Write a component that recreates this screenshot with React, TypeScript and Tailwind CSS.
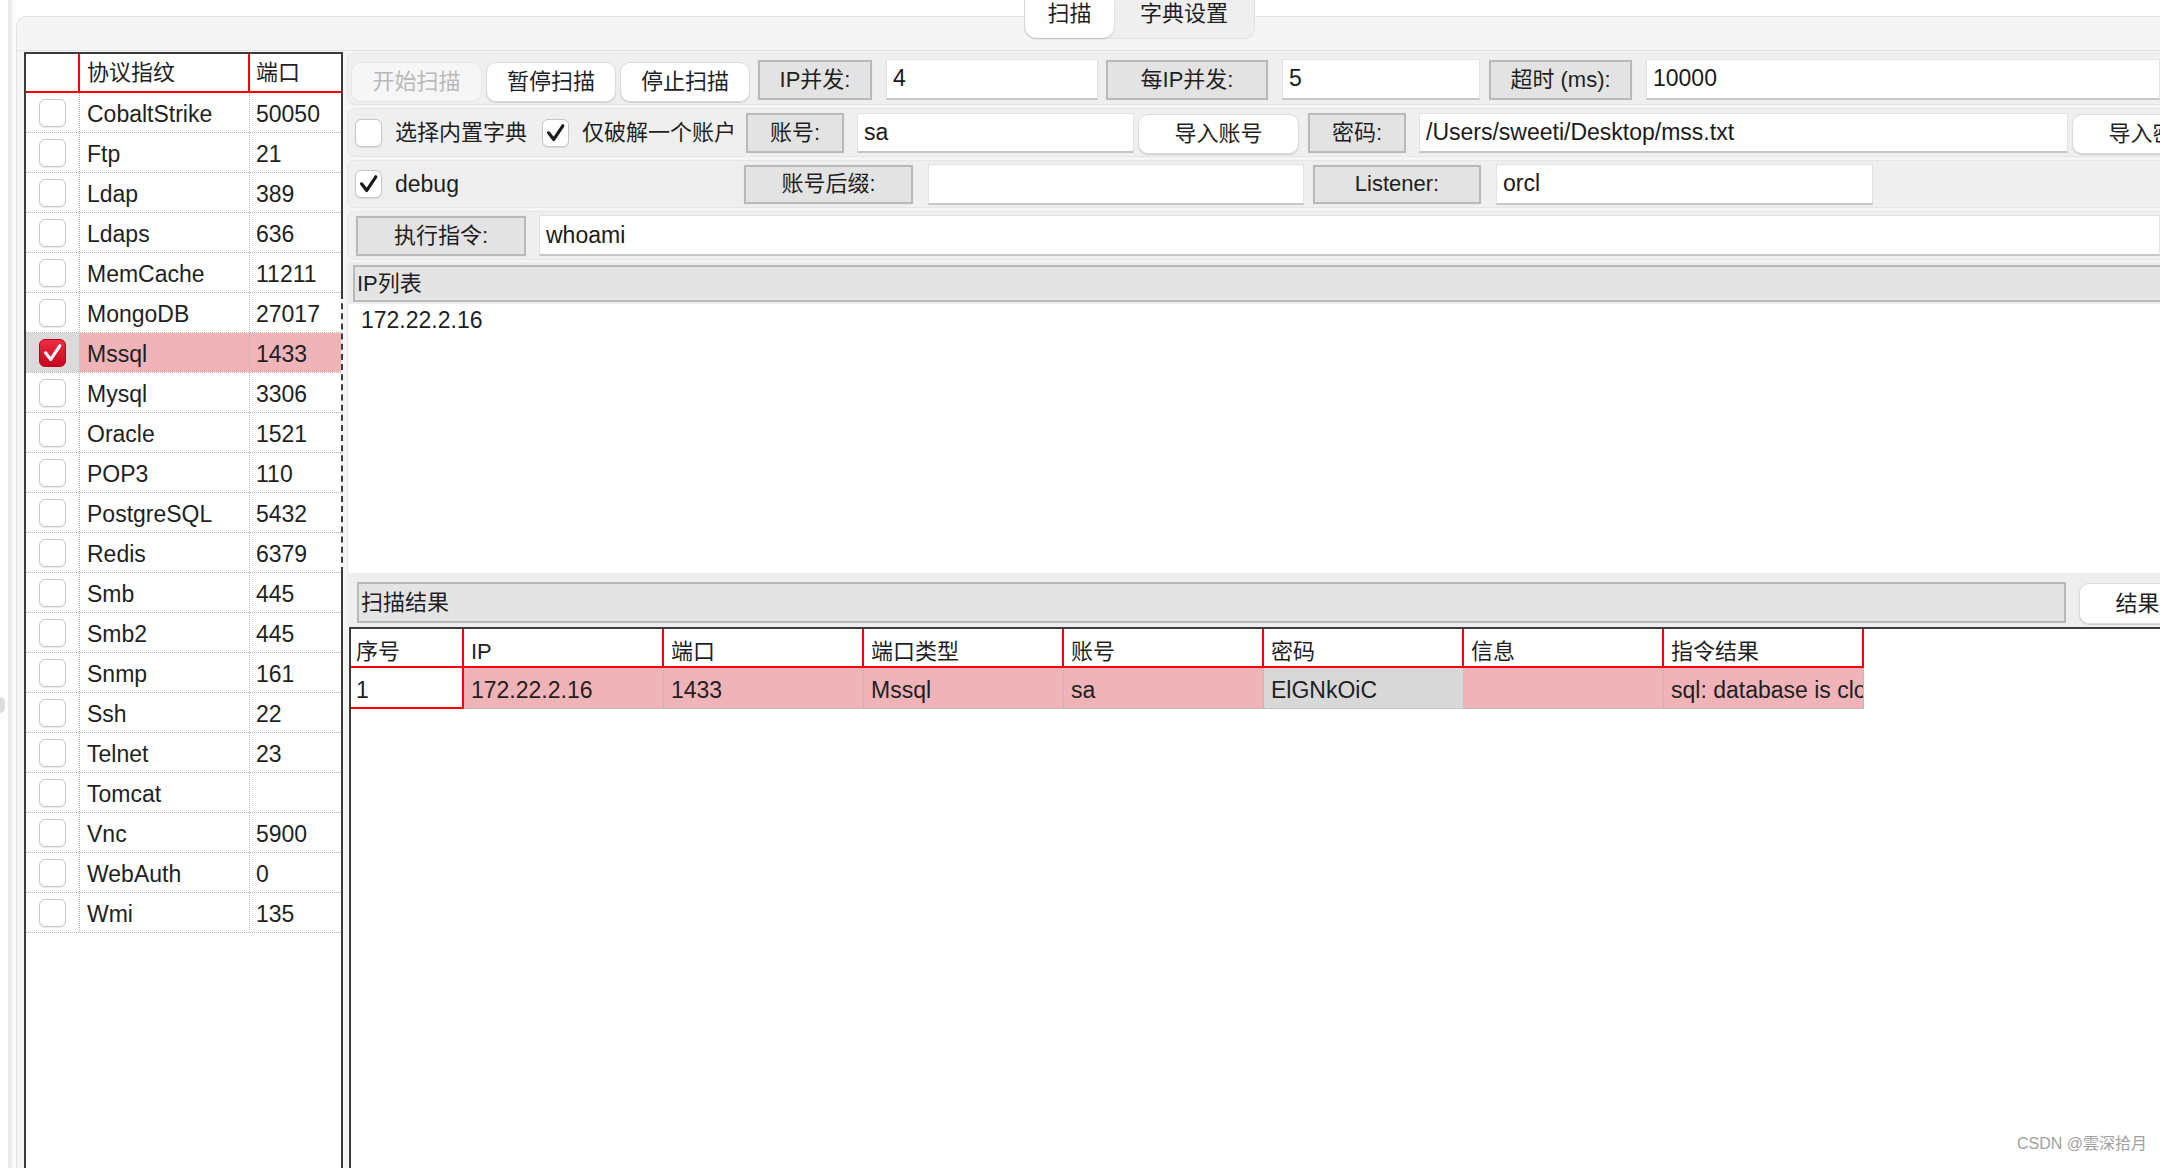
import React from "react";

type Proto = { name: string; port: string; checked?: boolean };

const protocols: Proto[] = [
  { name: "CobaltStrike", port: "50050" },
  { name: "Ftp", port: "21" },
  { name: "Ldap", port: "389" },
  { name: "Ldaps", port: "636" },
  { name: "MemCache", port: "11211" },
  { name: "MongoDB", port: "27017" },
  { name: "Mssql", port: "1433", checked: true },
  { name: "Mysql", port: "3306" },
  { name: "Oracle", port: "1521" },
  { name: "POP3", port: "110" },
  { name: "PostgreSQL", port: "5432" },
  { name: "Redis", port: "6379" },
  { name: "Smb", port: "445" },
  { name: "Smb2", port: "445" },
  { name: "Snmp", port: "161" },
  { name: "Ssh", port: "22" },
  { name: "Telnet", port: "23" },
  { name: "Tomcat", port: "" },
  { name: "Vnc", port: "5900" },
  { name: "WebAuth", port: "0" },
  { name: "Wmi", port: "135" },
];

const resultCols = ["IP", "端口", "端口类型", "账号", "密码", "信息", "指令结果"];
const resultRow = ["172.22.2.16", "1433", "Mssql", "sa", "ElGNkOiC", "", "sql: database is closed"];

function CheckMark({ color }: { color: string }) {
  return (
    <svg viewBox="0 0 27 28" className="w-full h-full">
      <path
        d="M6 13.8 L11.6 21 L21.4 6.2"
        fill="none"
        stroke={color}
        strokeWidth="3.4"
        strokeLinecap="round"
        strokeLinejoin="round"
      />
    </svg>
  );
}

function Box({ checked, red }: { checked?: boolean; red?: boolean }) {
  if (checked && red) {
    return (
      <div className="w-[27px] h-[28px] shrink-0 rounded-[6px] bg-gradient-to-b from-[#ef2b44] to-[#c6001b] border border-[#b50018]">
        <CheckMark color="#ffffff" />
      </div>
    );
  }
  return (
    <div className="w-[27px] h-[28px] shrink-0 rounded-[6px] bg-white border border-[#c6c6c6] shadow-[0_1px_1px_rgba(0,0,0,0.08)]">
      {checked && <CheckMark color="#1a1a1a" />}
    </div>
  );
}

function Tag({ className, children }: { className: string; children: React.ReactNode }) {
  return (
    <div
      className={`shrink-0 flex items-center justify-center border-2 border-[#b9b9b9] bg-[#e3e3e3] outline outline-1 outline-[#ebebeb] ${className}`}
    >
      {children}
    </div>
  );
}

function Field({ className, value }: { className: string; value: string }) {
  return (
    <input
      readOnly
      defaultValue={value}
      className={`shrink-0 bg-white border border-[#e2e2e2] border-b-2 border-b-[#c6c6c6] px-[6px] text-[23px] text-[#1a1a1a] outline-none ${className}`}
    />
  );
}

function Btn({ className, children, disabled }: { className: string; children: React.ReactNode; disabled?: boolean }) {
  return (
    <button
      type="button"
      className={`shrink-0 flex items-center justify-center whitespace-nowrap rounded-[10px] border ${
        disabled
          ? "bg-[#f6f6f6] border-[#e6e6e6] text-[#b9b9b9]"
          : "bg-white border-[#dcdcdc] shadow-[0_1px_1px_rgba(0,0,0,0.14)] text-[#1f1f1f]"
      } ${className}`}
    >
      {children}
    </button>
  );
}

function Band({ className, children }: { className: string; children: React.ReactNode }) {
  return (
    <div className={`shrink-0 flex items-center rounded-l-[8px] bg-[#efefef] border-y border-l border-[#e5e5e5] ${className}`}>
      {children}
    </div>
  );
}

export default function App() {
  return (
    <div className="relative w-[2160px] h-[1168px] overflow-hidden bg-white flex text-[#1f1f1f] text-[22px] leading-[28px] [font-family:'Liberation_Sans','Noto_Sans_CJK_SC',sans-serif]">
      <div className="w-2 shrink-0 bg-white">
        <div className="mt-[697px] w-[5px] h-[16px] rounded-r-full bg-[#dcdcdc]" />
      </div>
      <div className="w-1 shrink-0 bg-[#e9e9e9]" />
      <div className="w-1 shrink-0 bg-[#fafafa]" />

      {/* tab pane */}
      <div className="flex-1 min-w-0 mt-4 flex flex-col bg-[#f5f5f5] border-l border-t border-[#e2e2e2] rounded-tl-[10px]">
        <div className="h-[33px] shrink-0 flex">
          <div className="ml-[1007px] -mt-[17px] h-[39px] flex rounded-b-[12px] bg-[#efefef] border border-t-0 border-[#e0e0e0]">
            <div className="w-[89px] rounded-b-[12px] bg-white shadow-[0_1px_2px_rgba(0,0,0,0.18)] text-center">扫描</div>
            <div className="w-[140px] text-center">字典设置</div>
          </div>
        </div>

        <div className="flex-1 min-h-0 flex border-t border-[#e2e2e2]">
          {/* protocol table */}
          <div className="w-[330px] shrink-0 pl-[7px] pt-[1px] flex">
            <div className="w-[317px] flex flex-col bg-white border-l-2 border-t-2 border-[#3c3c3c]">
              <div className="grid grid-cols-[54px_170px_1fr] h-[39px] shrink-0 border-b-2 border-[#ff0000]">
                <div className="border-r-2 border-[#ff0000]" />
                <div className="border-r-2 border-[#ff0000] pl-[7px] flex items-center">协议指纹</div>
                <div className="pl-[6px] flex items-center">端口</div>
              </div>
              {protocols.map((p) => (
                <div
                  key={p.name}
                  className="grid grid-cols-[54px_170px_1fr] h-[40px] shrink-0 border-b border-dotted border-[#b3b3b3] text-[23px]"
                >
                  <div
                    className={`flex items-center justify-center border-r border-dotted border-[#b3b3b3] ${
                      p.checked ? "bg-[#dadada]" : ""
                    }`}
                  >
                    <Box checked={p.checked} red />
                  </div>
                  <div
                    className={`flex items-center pl-[7px] pt-[2px] border-r border-dotted border-[#b3b3b3] ${
                      p.checked ? "bg-[#f0b3b7]" : ""
                    }`}
                  >
                    {p.name}
                  </div>
                  <div className={`flex items-center pl-[6px] pt-[2px] ${p.checked ? "bg-[#f0b3b7]" : ""}`}>{p.port}</div>
                </div>
              ))}
            </div>
            <div className="w-[2px] flex flex-col">
              <div className="h-[241px] bg-[#3c3c3c]" />
              <div className="h-[280px] border-l-2 border-dashed border-[#3c3c3c]" />
              <div className="flex-1 bg-[#3c3c3c]" />
            </div>
          </div>

          {/* right side */}
          <div className="flex-1 min-w-0 flex flex-col pt-[2px] bg-[#f5f5f5] overflow-hidden">
            <Band className="h-[52px] pl-[3px]">
              <Btn disabled className="w-[131px] h-[40px] mt-[6px]">开始扫描</Btn>
              <Btn className="ml-[4px] w-[130px] h-[40px] mt-[6px]">暂停扫描</Btn>
              <Btn className="ml-[4px] w-[130px] h-[40px] mt-[6px]">停止扫描</Btn>
              <Tag className="ml-[8px] w-[114px] h-[40px] mt-[2px]">IP并发:</Tag>
              <Field className="ml-[14px] w-[212px] h-[41px]" value="4" />
              <Tag className="ml-[8px] w-[162px] h-[40px] mt-[2px]">每IP并发:</Tag>
              <Field className="ml-[14px] w-[198px] h-[41px]" value="5" />
              <Tag className="ml-[9px] w-[143px] h-[40px] mt-[2px]">超时 (ms):</Tag>
              <Field className="ml-[14px] flex-1 min-w-0 h-[41px]" value="10000" />
            </Band>

            <Band className="mt-[3px] h-[49px] pl-[7px]">
              <Box />
              <span className="ml-[13px] w-[147px] shrink-0 whitespace-nowrap">选择内置字典</span>
              <Box checked />
              <span className="ml-[13px] w-[164px] shrink-0 whitespace-nowrap">仅破解一个账户</span>
              <Tag className="w-[98px] h-[40px]">账号:</Tag>
              <Field className="ml-[13px] w-[277px] h-[40px]" value="sa" />
              <Btn className="ml-[4px] w-[161px] h-[40px] mt-[3px]">导入账号</Btn>
              <Tag className="ml-[9px] w-[98px] h-[40px]">密码:</Tag>
              <Field className="ml-[13px] w-[649px] h-[40px]" value="/Users/sweeti/Desktop/mss.txt" />
              <Btn className="ml-[4px] w-[161px] h-[40px] mt-[3px]">导入密码</Btn>
            </Band>

            <Band className="mt-[3px] h-[48px] pl-[7px]">
              <Box checked />
              <span className="ml-[13px] w-[349px] shrink-0 text-[23px]">debug</span>
              <Tag className="w-[169px] h-[39px]">账号后缀:</Tag>
              <Field className="ml-[15px] w-[376px] h-[41px]" value="" />
              <Tag className="ml-[9px] w-[168px] h-[39px]">Listener:</Tag>
              <Field className="ml-[15px] w-[377px] h-[41px]" value="orcl" />
            </Band>

            <Band className="mt-[3px] h-[49px] pl-[8px]">
              <Tag className="w-[170px] h-[40px]">执行指令:</Tag>
              <Field className="ml-[13px] flex-1 min-w-0 h-[41px]" value="whoami" />
            </Band>

            {/* IP list */}
            <div className="mt-[2px] shrink-0 bg-[#ececec] pt-[3px] pb-[2px] pl-[6px]">
              <div className="h-[37px] border-2 border-r-0 border-[#b8b8b8] bg-[#e4e4e4] flex items-center pl-[2px]">IP列表</div>
            </div>
            <div className="h-[269px] shrink-0 bg-white border-l border-[#e6e6e6] pl-[13px] pt-[2px] text-[23px]">172.22.2.16</div>

            {/* result header */}
            <div className="h-[54px] shrink-0 bg-[#eeeeee] flex items-start pt-[9px] pl-[10px]">
              <div className="w-[1709px] shrink-0 h-[41px] border-2 border-[#b8b8b8] bg-[#e4e4e4] flex items-center pl-[2px]">扫描结果</div>
              <Btn className="ml-[13px] w-[161px] h-[41px] mt-[1px]">结果导出</Btn>
            </div>

            {/* result table */}
            <div className="flex-1 ml-[2px] bg-white border-l-2 border-t-2 border-[#3c3c3c] flex flex-col">
              <div className="flex h-[39px] shrink-0">
                <div className="w-[113px] shrink-0 border-r-2 border-b-2 border-[#ff0000] pl-[5px] pt-[9px]">序号</div>
                {resultCols.map((c) => (
                  <div key={c} className="w-[200px] shrink-0 border-r-2 border-b-2 border-[#ff0000] pl-[7px] pt-[9px]">
                    {c}
                  </div>
                ))}
              </div>
              <div className="flex h-[41px] shrink-0 text-[23px]">
                <div className="w-[113px] shrink-0 bg-white border-r-2 border-b-2 border-[#ff0000] pl-[5px] pt-[8px]">1</div>
                {resultRow.map((v, i) => (
                  <div
                    key={i}
                    className={`w-[200px] shrink-0 overflow-hidden whitespace-nowrap border-r border-b border-dotted border-[#b0b0b0] pl-[7px] pt-[8px] ${
                      i === 4 ? "bg-[#d8d8d8]" : "bg-[#f0b3b7]"
                    }`}
                  >
                    {v}
                  </div>
                ))}
              </div>
            </div>
          </div>
        </div>
      </div>

      <div className="absolute right-[13px] bottom-[14px] text-[16px] leading-[20px] text-[#a0a0a0]">CSDN @雲深拾月</div>
    </div>
  );
}
